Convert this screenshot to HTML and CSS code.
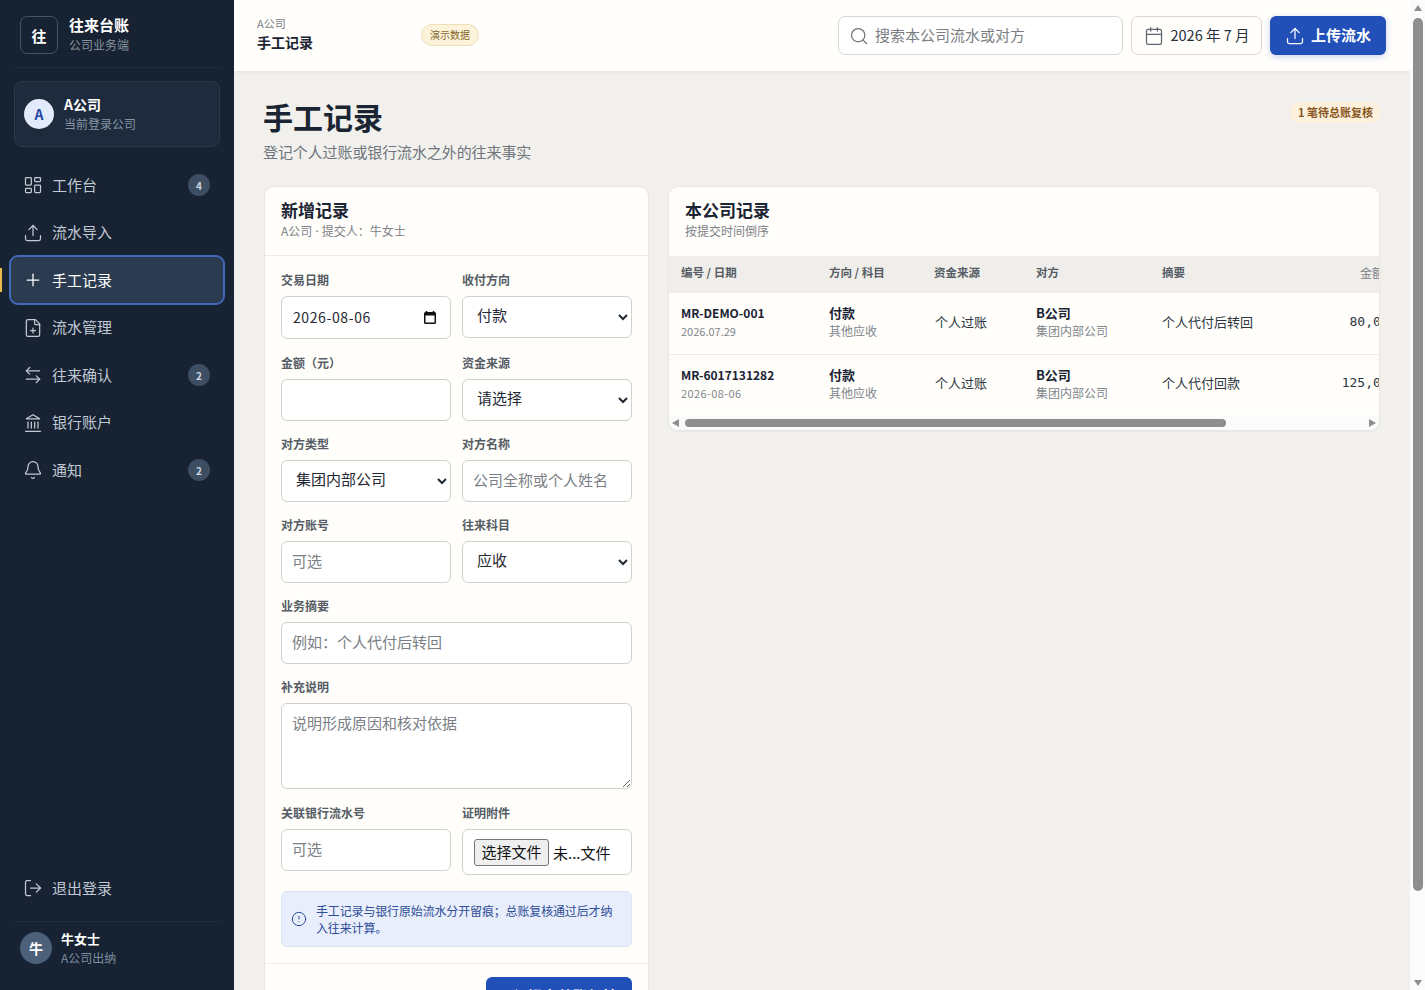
FILE: index.html
```html
<!DOCTYPE html>
<html lang="zh-CN">
<head>
<meta charset="utf-8">
<title>手工记录</title>
<link rel="stylesheet" href="styles.css">
</head>
<body>
<div class="app">
  <aside class="sidebar">
    <div class="brand">
      <div class="brand-mark">往</div>
      <div>
        <div class="brand-name">往来台账</div>
        <div class="brand-sub">公司业务端</div>
      </div>
    </div>
    <div class="company">
      <div class="company-avatar">A</div>
      <div class="company-text">
        <div class="company-name">A公司</div>
        <div class="company-sub">当前登录公司</div>
      </div>
    </div>
    <nav class="nav">
      <a class="nav-item"><svg class="icon" viewBox="0 0 24 24"><rect x="3" y="3" width="7" height="9" rx="1"/><rect x="14" y="3" width="7" height="5" rx="1"/><rect x="14" y="12" width="7" height="9" rx="1"/><rect x="3" y="16" width="7" height="5" rx="1"/></svg><span class="nav-label">工作台</span><span class="badge">4</span></a>
      <a class="nav-item"><svg class="icon" viewBox="0 0 24 24"><path d="M21 15v4a2 2 0 0 1-2 2H5a2 2 0 0 1-2-2v-4"/><path d="M17 8l-5-5-5 5"/><path d="M12 3v12"/></svg><span class="nav-label">流水导入</span></a>
      <a class="nav-item active"><span class="active-bar"></span><svg class="icon" viewBox="0 0 24 24"><path d="M5 12h14"/><path d="M12 5v14"/></svg><span class="nav-label">手工记录</span></a>
      <a class="nav-item"><svg class="icon" viewBox="0 0 24 24"><path d="M15 2H6a2 2 0 0 0-2 2v16a2 2 0 0 0 2 2h12a2 2 0 0 0 2-2V7z"/><path d="M14 2v5a1 1 0 0 0 1 1h5"/><path d="M9 15h6"/><path d="M12 18v-6"/></svg><span class="nav-label">流水管理</span></a>
      <a class="nav-item"><svg class="icon" viewBox="0 0 24 24"><path d="M8 3L4 7l4 4"/><path d="M4 7h16"/><path d="M16 21l4-4-4-4"/><path d="M20 17H4"/></svg><span class="nav-label">往来确认</span><span class="badge">2</span></a>
      <a class="nav-item"><svg class="icon" viewBox="0 0 24 24"><path d="M3 22h18"/><path d="M6 18v-7"/><path d="M10 18v-7"/><path d="M14 18v-7"/><path d="M18 18v-7"/><path d="M12 2l8 5H4z"/></svg><span class="nav-label">银行账户</span></a>
      <a class="nav-item"><svg class="icon" viewBox="0 0 24 24"><path d="M10.3 21a1.9 1.9 0 0 0 3.4 0"/><path d="M3.3 15.3A1 1 0 0 0 4 17h16a1 1 0 0 0 .7-1.700C19.400 14 18 12.500 18 8A6 6 0 0 0 6 8c0 4.500-1.400 6-2.700 7.300"/></svg><span class="nav-label">通知</span><span class="badge">2</span></a>
    </nav>
    <a class="nav-item logout"><svg class="icon" viewBox="0 0 24 24"><path d="M9 21H5a2 2 0 0 1-2-2V5a2 2 0 0 1 2-2h4"/><path d="M16 17l5-5-5-5"/><path d="M21 12H9"/></svg><span class="nav-label">退出登录</span></a>
    <div class="user">
      <div class="user-avatar">牛</div>
      <div class="user-text">
        <div class="user-name">牛女士</div>
        <div class="user-sub">A公司出纳</div>
      </div>
    </div>
  </aside>

  <div class="main">
    <header class="topbar">
      <div class="crumbs">
        <div class="crumb-top">A公司</div>
        <div class="crumb-title">手工记录</div>
      </div>
      <span class="demo-chip">演示数据</span>
      <div class="top-actions">
        <label class="search">
          <svg class="icon" viewBox="0 0 24 24"><circle cx="11" cy="11" r="8"/><path d="M21 21l-4.300-4.300"/></svg>
          <input class="search-input" placeholder="搜索本公司流水或对方">
        </label>
        <button class="month-btn" type="button"><svg class="icon" viewBox="0 0 24 24"><path d="M8 2v4"/><path d="M16 2v4"/><rect x="3" y="4" width="18" height="18" rx="2"/><path d="M3 10h18"/></svg><span class="btn-text">2026 年 7 月</span></button>
        <button class="upload-btn" type="button"><svg class="icon" viewBox="0 0 24 24"><path d="M21 15v4a2 2 0 0 1-2 2H5a2 2 0 0 1-2-2v-4"/><path d="M17 8l-5-5-5 5"/><path d="M12 3v12"/></svg><span class="btn-text">上传流水</span></button>
      </div>
    </header>

    <main class="content">
      <div class="page-head">
        <div>
          <h1 class="page-title">手工记录</h1>
          <p class="page-sub">登记个人过账或银行流水之外的往来事实</p>
        </div>
        <span class="pending-pill">1 笔待总账复核</span>
      </div>

      <div class="columns">
        <section class="card">
          <div class="card-head">
            <h2 class="card-title">新增记录</h2>
            <div class="card-sub">A公司<span class="dot"> · </span>提交人：牛女士</div>
          </div>
          <form class="form">
            <div class="field"><label class="label">交易日期</label>
              <div class="date-wrap">
                <input class="control date" type="text" value="2026-08-06">
                <svg class="date-icon" viewBox="0 0 12 13"><path d="M2.500 0v1.500M9.500 0v1.500" class="date-tick"/><rect x=".75" y="1.750" width="10.500" height="10.500" rx=".8" class="date-frame"/><rect x="1" y="2" width="10" height="2.500"/></svg>
              </div>
            </div>
            <div class="field"><label class="label">收付方向</label><select class="control"><option>付款</option><option>收款</option></select></div>
            <div class="field"><label class="label">金额（元）</label><input class="control" type="text"></div>
            <div class="field"><label class="label">资金来源</label><select class="control"><option>请选择</option></select></div>
            <div class="field"><label class="label">对方类型</label><select class="control"><option>集团内部公司</option></select></div>
            <div class="field"><label class="label">对方名称</label><input class="control" placeholder="公司全称或个人姓名"></div>
            <div class="field"><label class="label">对方账号</label><input class="control" placeholder="可选"></div>
            <div class="field"><label class="label">往来科目</label><select class="control"><option>应收</option></select></div>
            <div class="field wide"><label class="label">业务摘要</label><input class="control" placeholder="例如：个人代付后转回"></div>
            <div class="field wide"><label class="label">补充说明</label><textarea class="control area" placeholder="说明形成原因和核对依据"></textarea></div>
            <div class="field"><label class="label">关联银行流水号</label><input class="control" placeholder="可选"></div>
            <div class="field"><label class="label">证明附件</label>
              <div class="control file"><button class="file-btn" type="button">选择文件</button><span class="file-name">未...文件</span></div>
            </div>
            <div class="notice wide">
              <svg class="icon" viewBox="0 0 24 24"><circle cx="12" cy="12" r="10"/><path d="M12 8v4"/><path d="M12 16h.01"/></svg>
              <span>手工记录与银行原始流水分开留痕；总账复核通过后才纳入往来计算。</span>
            </div>
          </form>
          <div class="card-foot"><button class="submit-btn" type="button"><svg class="icon" viewBox="0 0 24 24"><path d="M20 6L9 17l-5-5"/></svg>提交总账复核</button></div>
        </section>

        <section class="card records">
          <div class="card-head records-head">
            <h2 class="card-title">本公司记录</h2>
            <div class="card-sub">按提交时间倒序</div>
          </div>
          <div class="table-wrap">
            <table class="table">
              <thead>
                <tr><th class="c1">编号 / 日期</th><th class="c2">方向 / 科目</th><th class="c3">资金来源</th><th class="c4">对方</th><th class="c5">摘要</th><th class="c6 num">金额（元）</th><th class="c7">状态</th></tr>
              </thead>
              <tbody>
                <tr>
                  <td><div class="id">MR-DEMO-001</div><div class="muted-date">2026.07.29</div></td>
                  <td><div class="strong">付款</div><div class="muted">其他应收</div></td>
                  <td class="plain shift">个人过账</td>
                  <td><div class="strong">B公司</div><div class="muted">集团内部公司</div></td>
                  <td class="plain">个人代付后转回</td>
                  <td class="plain num">80,000.00</td>
                  <td class="plain">已入账</td>
                </tr>
                <tr>
                  <td><div class="id">MR-6017131282</div><div class="muted-date dashed">2026-08-06</div></td>
                  <td><div class="strong">付款</div><div class="muted">其他应收</div></td>
                  <td class="plain shift">个人过账</td>
                  <td><div class="strong">B公司</div><div class="muted">集团内部公司</div></td>
                  <td class="plain">个人代付回款</td>
                  <td class="plain num">125,000.00</td>
                  <td class="plain">待复核</td>
                </tr>
              </tbody>
            </table>
          </div>
          <div class="h-scrollbar">
            <span class="arrow-left"></span>
            <span class="h-track"><span class="h-thumb"></span></span>
            <span class="arrow-right"></span>
          </div>
        </section>
      </div>
    </main>
  </div>
</div>
<div class="v-scrollbar">
  <span class="arrow-up"></span>
  <span class="v-track"><span class="v-thumb"></span></span>
  <span class="arrow-down"></span>
</div>
</body>
</html>
```
FILE: styles.css
```css
* { box-sizing: border-box; }
html, body { margin: 0; padding: 0; }
body {
  font-family: "Noto Sans CJK SC", "Noto Sans", sans-serif;
  color: #1a2433;
  background: #f1f0ec;
  font-size: 13px;
}
.icon {
  width: 20px;
  height: 20px;
  fill: none;
  stroke: currentColor;
  stroke-width: 1.5;
  stroke-linecap: round;
  stroke-linejoin: round;
  flex: none;
}
.app { display: flex; align-items: flex-start; padding-right: 15px; }

/* sidebar */
.sidebar {
  position: sticky;
  top: 0;
  width: 234px;
  height: 100vh;
  flex: none;
  background: #172232;
  display: flex;
  flex-direction: column;
  padding: 0 13px;
  color: #c7d0db;
}
.brand {
  display: flex;
  align-items: center;
  gap: 11px;
  height: 68px;
  padding: 3px 7px 0;
  border-bottom: 1px solid #202c3d;
}
.brand-mark {
  width: 38px;
  height: 38px;
  border: 1px solid #47535f;
  border-radius: 7px;
  color: #fff;
  font-weight: 700;
  font-size: 15px;
  display: flex;
  align-items: center;
  justify-content: center;
}
.brand-name { color: #fff; font-size: 15px; font-weight: 700; line-height: 20px; }
.brand-sub { color: #87939f; font-size: 12px; line-height: 20px; }
.company {
  display: flex;
  align-items: center;
  gap: 10px;
  margin: 13px 1px 0;
  height: 66px;
  padding: 0 9px;
  background: #1d2b3d;
  border: 1px solid #2b394b;
  border-radius: 8px;
}
.company-avatar {
  width: 30px;
  height: 30px;
  border-radius: 50%;
  background: #e3eafa;
  color: #2446a5;
  font-weight: 700;
  font-size: 14px;
  display: flex;
  align-items: center;
  justify-content: center;
}
.company-text { padding-bottom: 1px; }
.company-name { color: #fff; font-size: 14px; font-weight: 700; line-height: 20px; }
.company-sub { color: #8795a6; font-size: 12px; line-height: 20px; }
.nav {
  flex: 1;
  display: flex;
  flex-direction: column;
  gap: 1.500px;
  padding-top: 15px;
}
.nav-item {
  position: relative;
  display: flex;
  align-items: center;
  height: 46px;
  margin: 0 -2px;
  padding: 0 13px 0 12px;
  border-radius: 7px;
  color: #c0c9d4;
  font-size: 15px;
}
.nav-item .icon { margin-right: 9px; }
.nav-label { flex: 1; padding-bottom: 2px; }
.nav-item.active {
  background: #2b3b50;
  color: #fff;
  outline: 2px solid #4169b8;
}
.active-bar {
  position: absolute;
  left: -11px;
  top: 11px;
  width: 2px;
  height: 24px;
  background: #e8b84a;
}
.badge {
  width: 22px;
  height: 22px;
  border-radius: 50%;
  background: #3d4e63;
  color: #cdd6e0;
  font-size: 10px;
  font-weight: 600;
  display: flex;
  align-items: center;
  justify-content: center;
}
.logout { flex: none; margin-bottom: 10px; }
.user {
  display: flex;
  align-items: flex-start;
  gap: 9px;
  height: 69px;
  padding: 10px 7px 0;
  border-top: 1px solid #202c3d;
}
.user-avatar {
  width: 32px;
  height: 32px;
  border-radius: 50%;
  background: #4d6079;
  color: #fff;
  font-weight: 700;
  font-size: 14px;
  display: flex;
  align-items: center;
  justify-content: center;
}
.user-text { margin-top: -2px; }
.user-name { color: #fff; font-size: 13px; font-weight: 700; line-height: 18px; }
.user-sub { color: #7f8ea1; font-size: 12px; line-height: 19px; }

/* main */
.main { flex: 1; min-width: 0; }
.topbar {
  height: 71px;
  background: #fffefb;
  display: flex;
  align-items: center;
  padding: 0 24px 0 23px;
  box-shadow: 0 1px 3px rgba(30, 30, 30, .06);
  position: relative;
}
.crumbs { width: 164px; padding-bottom: 5px; }
.crumb-top { color: #7a8088; font-size: 11px; line-height: 18px; }
.crumb-title { color: #1a2433; font-size: 14px; font-weight: 700; line-height: 20px; }
.demo-chip {
  height: 22px;
  padding: 0 8px;
  margin-bottom: 1px;
  border: 1px solid #eddfb8;
  border-radius: 11px;
  background: #fdf3da;
  color: #86682a;
  font-size: 10px;
  line-height: 20px;
}
.top-actions { margin-left: auto; display: flex; gap: 8px; }
.search {
  width: 285px;
  height: 39px;
  display: flex;
  align-items: center;
  gap: 6px;
  padding: 0 10px;
  background: #fff;
  border: 1px solid #d9d7d2;
  border-radius: 7px;
  color: #6c7278;
}
.search-input {
  flex: 1;
  min-width: 0;
  border: 0;
  outline: 0;
  background: transparent;
  padding: 0 0 2px;
  font: 15px "Noto Sans CJK SC", "Noto Sans", sans-serif;
}
.search-input::placeholder { color: #7b7f85; }
.btn-text { padding-bottom: 2px; }
.month-btn {
  width: 131px;
  height: 39px;
  display: flex;
  align-items: center;
  justify-content: center;
  gap: 7px;
  background: #fffefb;
  border: 1px solid #d9d7d2;
  border-radius: 7px;
  color: #27303c;
  font: 14.500px "Noto Sans CJK SC", "Noto Sans", sans-serif;
}
.month-btn .icon { color: #5f6670; }
.upload-btn {
  width: 116px;
  height: 39px;
  display: flex;
  align-items: center;
  justify-content: center;
  gap: 6px;
  background: #2150b8;
  border: 0;
  border-radius: 6px;
  color: #fff;
  font: 700 15px "Noto Sans CJK SC", "Noto Sans", sans-serif;
  box-shadow: 0 2px 6px rgba(33, 80, 184, .25);
}

.content { padding: 27px 30px 50px 29px; }
.page-head { display: flex; justify-content: space-between; align-items: flex-start; }
.page-title { margin: 0; font-size: 30px; font-weight: 700; line-height: 36px; color: #1a2433; }
.page-sub { margin: 7px 0 0; font-size: 15px; letter-spacing: -.1px; line-height: 22px; color: #6f757c; }
.pending-pill {
  margin-top: 4px;
  height: 21px;
  padding: 0 7px 0 8px;
  border-radius: 10px;
  background: #fdf0dc;
  color: #87561c;
  font-size: 11px;
  font-weight: 700;
  line-height: 21px;
}
.columns {
  display: grid;
  grid-template-columns: 385px 1fr;
  gap: 19px;
  align-items: start;
  margin: 23px 0 0 1px;
}
.card {
  background: #fffefb;
  border: 1px solid #e9e6e0;
  border-radius: 10px;
  min-width: 0;
  overflow: hidden;
  box-shadow: 0 1px 2px rgba(30, 30, 30, .04);
}
.card-head { height: 69px; padding: 11px 16px 0; border-bottom: 1px solid #eeece7; }
.card-title { margin: 0; font-size: 17px; font-weight: 700; line-height: 23px; color: #1a2433; }
.card-sub { font-size: 12px; line-height: 19px; color: #7c8187; }
.dot { font-family: "Noto Sans", sans-serif; }
.records-head { border-bottom: 0; }

.form {
  display: grid;
  grid-template-columns: 170px 170px;
  column-gap: 11px;
  row-gap: 13px;
  padding: 14px 16px 16px;
  align-items: start;
}
.wide { grid-column: 1 / -1; }
.label {
  display: block;
  margin-bottom: 6px;
  color: #555c65;
  font-size: 12px;
  font-weight: 700;
  line-height: 20px;
}
.control {
  display: block;
  width: 100%;
  height: 42px;
  padding: 0 10px 4px;
  background: #fff;
  border: 1px solid #d3d1cc;
  border-radius: 6px;
  color: #1f2833;
  font: 15px "Noto Sans CJK SC", "Noto Sans", sans-serif;
}
select.control { padding: 0 10px 6px; }
.control::placeholder { color: #7b7f85; }
.date-wrap { position: relative; margin-bottom: 1px; }
.date { height: 43px; padding: 0 10px 2px 11px; font-size: 14px; letter-spacing: .6px; }
.date-icon { position: absolute; left: 143px; top: 15px; width: 12px; height: 13px; fill: #111; }
.date-frame { fill: none; stroke: #111; stroke-width: 1.500; }
.date-tick { fill: none; stroke: #111; stroke-width: 1.500; }
.area { height: 86px; padding-top: 8px; margin-bottom: 1px; }
.file { height: 46px; padding: 9px 11px; display: flex; align-items: flex-start; }
.file-btn {
  width: 75px;
  height: 27px;
  padding: 0 0 2px;
  background: #efefef;
  border: 1px solid #767676;
  border-radius: 3px;
  color: #111;
  font: 15px "Noto Sans CJK SC", "Noto Sans", sans-serif;
}
.file-name { margin: 3px 0 0 4px; color: #111; line-height: 22px; }
.notice {
  display: flex;
  align-items: center;
  gap: 9px;
  margin-top: 3px;
  height: 56px;
  padding: 0 9px;
  background: #e8eefb;
  border: 1px solid #dbe4f6;
  border-radius: 6px;
  color: #2e4d97;
  font-size: 12px;
  letter-spacing: -.15px;
  line-height: 17px;
}
.notice .icon { width: 16px; height: 16px; }
.card-foot {
  display: flex;
  justify-content: flex-end;
  padding: 13px 16px 14px;
  border-top: 1px solid #f1efea;
}
.submit-btn {
  width: 146px;
  height: 42px;
  display: flex;
  align-items: center;
  justify-content: center;
  gap: 7px;
  padding: 0 0 6px;
  background: #2150b8;
  border: 0;
  border-radius: 6px;
  color: #fff;
  font: 700 15px "Noto Sans CJK SC", "Noto Sans", sans-serif;
}

/* table */
.table-wrap { overflow: hidden; }
.table { width: 900px; table-layout: fixed; border-collapse: collapse; }
.c1 { width: 148px; }
.c2 { width: 105px; }
.c3 { width: 102px; }
.c4 { width: 126px; }
.c5 { width: 154px; }
.c6 { width: 129px; }
.c7 { width: 136px; }
.table th {
  height: 37px;
  padding: 0 13px 5px 12px;
  background: #f0eeea;
  color: #555c65;
  font-size: 11.500px;
  font-weight: 700;
  text-align: left;
}
.table th.num {
  font-family: "DejaVu Sans Mono", "Noto Sans CJK SC", monospace;
  font-weight: 400;
  font-size: 12px;
  text-align: right;
  color: #7c8187;
}
.table td {
  height: 61px;
  padding: 0 13px 2px 12px;
  color: #2c3540;
  font-size: 13px;
  border-bottom: 1px solid #eeece7;
  vertical-align: middle;
}
.table tbody tr:last-child td { border-bottom: 0; }
.table td.plain { padding-bottom: 4px; }
.table td.shift { padding-left: 13px; }
.table td.num {
  font-family: "DejaVu Sans Mono", "Noto Sans CJK SC", monospace;
  font-size: 13px;
  text-align: right;
}
.id { color: #1a2433; font-size: 12px; font-weight: 700; line-height: 18px; }
.strong { color: #1a2433; font-size: 13px; font-weight: 700; line-height: 18px; }
.muted { color: #80858b; font-size: 12px; line-height: 18px; }
.muted-date { color: #80858b; font-size: 11px; line-height: 18px; }
.dashed { letter-spacing: .4px; }

/* scrollbars drawn as page furniture */
.h-scrollbar {
  display: flex;
  align-items: center;
  gap: 4px;
  height: 15px;
  padding: 0 3px;
  background: #fbfbfc;
}
.h-track { flex: 1; display: block; padding-left: 2px; }
.h-thumb {
  display: block;
  width: 541px;
  height: 8px;
  border-radius: 4px;
  background: #8e8e8e;
}
.arrow-left, .arrow-right { width: 0; height: 0; border-style: solid; border-color: transparent; }
.arrow-left { border-width: 4px 7px 4px 0; border-right-color: #8e8e8e; }
.arrow-right { border-width: 4px 0 4px 7px; border-left-color: #8e8e8e; }

.v-scrollbar {
  position: fixed;
  top: 0;
  right: 0;
  bottom: 0;
  width: 15px;
  display: flex;
  flex-direction: column;
  align-items: center;
  padding: 5px 0 4px;
  background: #fbfbfb;
}
.v-track { flex: 1; display: block; padding: 7px 0; }
.v-thumb {
  display: block;
  width: 10px;
  height: 873px;
  border-radius: 5px;
  background: #8e8e8e;
}
.arrow-up, .arrow-down { width: 0; height: 0; border-style: solid; border-color: transparent; }
.arrow-up { border-width: 0 4.500px 6px; border-bottom-color: #8e8e8e; }
.arrow-down { border-width: 6px 4.500px 0; border-top-color: #8e8e8e; }
```
